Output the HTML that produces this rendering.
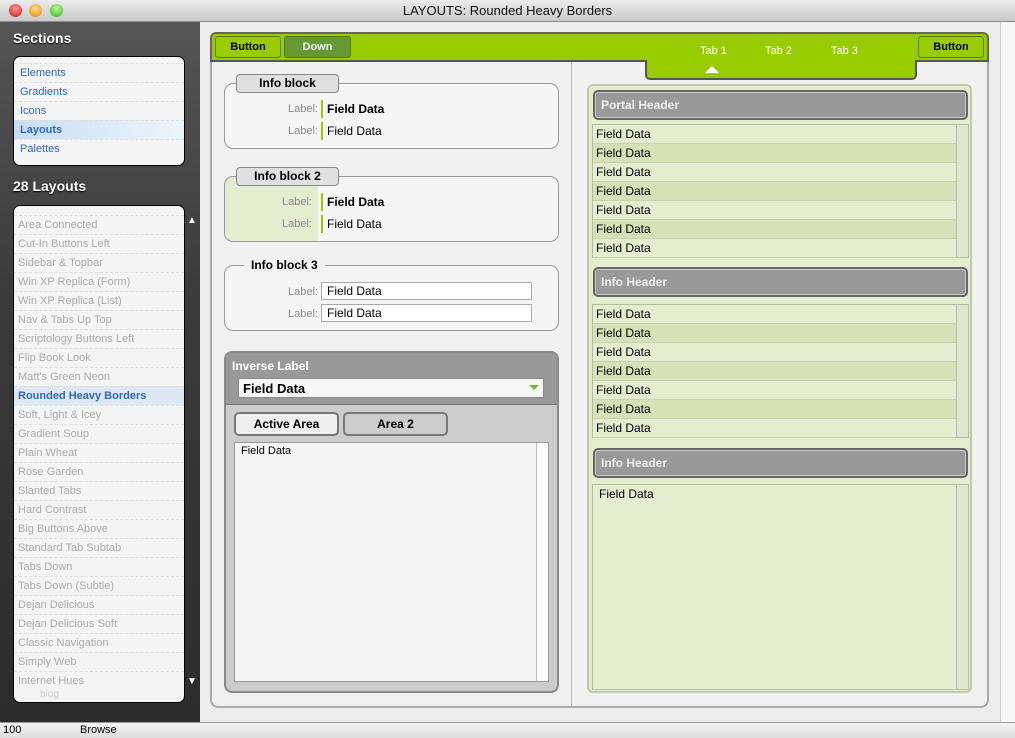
<!DOCTYPE html><html><head><style>
*{margin:0;padding:0;box-sizing:border-box}
body{width:1015px;height:738px;overflow:hidden;font-family:"Liberation Sans",sans-serif;background:#ededed;position:relative;font-size:12px}
.a{position:absolute}
.title{left:0;top:0;width:1015px;height:22px;background:linear-gradient(#ececec,#c9c9c9);border-bottom:1px solid #8c8c8c;text-align:center;font-size:13px;line-height:22px;color:#111}
.dot{width:13px;height:13px;border-radius:50%;top:4px}
.side{left:0;top:22px;width:200px;height:700px;background:linear-gradient(#555 0,#3a3a3a 40%,#2c2c2c)}
.h{color:#fff;font-weight:bold;font-size:14px;text-shadow:0 1px 1px #000}
.box{background:#f4f4f4;border:1px solid #000;border-radius:7px;overflow:hidden}
.it{height:19px;line-height:19px;padding-left:6px;border-top:1px dashed #ddd;font-size:11px}
.sec .it{color:#3366bb}
.lay .it{color:#aaa;padding-left:4px}
.fr{border:2px solid #aaa;border-radius:8px;background:#f1f1f1}
.btn{border:1px solid #5a7a00;border-radius:3px;background:#9c0;font-weight:bold;font-size:11px;text-align:center;line-height:20px;height:22px}
.ib{border:1px solid #999;border-radius:9px;background:#f5f5f5}
.leg{border:1px solid #888;border-radius:4px;background:#e0e0e0;font-weight:bold;font-size:12px;text-align:center;height:19px;line-height:17px}
.lab{color:#888;font-size:11px;text-align:right;width:92px}
.fd{font-size:12px;border-left:2px solid #9c0;padding-left:4px;height:18px;line-height:18px}
.ph{background:#999;border:2px solid #666;border-radius:5px;color:#eee;font-weight:bold;font-size:12px;padding-left:6px;line-height:26px;height:30px;box-shadow:inset 0 0 0 1px #ccc}
.rows{background:#e5ecd0;border:1px solid #b5bd9d}
.r{height:19px;line-height:19px;padding-left:3px;border-bottom:1px solid #c8d0b0;font-size:12px;margin-right:12px}
.r:nth-child(even){background:#d8e0b8}
.sb{right:0;top:0;width:12px;bottom:0;background:#e0e6cc;border-left:1px solid #bbb}
.tb{color:#fff;font-size:11px}
</style></head><body>
<div class="a title">LAYOUTS: Rounded Heavy Borders</div>
<div class="a dot" style="left:9px;background:radial-gradient(circle at 50% 35%,#f99,#c11)"></div>
<div class="a dot" style="left:29px;background:radial-gradient(circle at 50% 35%,#fd8,#d80)"></div>
<div class="a dot" style="left:50px;background:radial-gradient(circle at 50% 35%,#bf9,#3a1)"></div>
<div class="a side"></div>
<div class="a h" style="left:13px;top:30px">Sections</div>
<div class="a box sec" style="left:13px;top:56px;width:172px;height:110px;padding-top:6px">
<div class="it">Elements</div><div class="it">Gradients</div><div class="it">Icons</div><div class="it" style="background:linear-gradient(90deg,#c8def4,#eef4fa);font-weight:bold">Layouts</div><div class="it">Palettes</div></div>
<div class="a h" style="left:13px;top:178px">28 Layouts</div>
<div class="a box lay" style="left:13px;top:205px;width:172px;height:498px;padding-top:9px">
<div class="it">Area Connected</div><div class="it">Cut-In Buttons Left</div><div class="it">Sidebar &amp; Topbar</div><div class="it">Win XP Replica (Form)</div><div class="it">Win XP Replica (List)</div><div class="it">Nav &amp; Tabs Up Top</div><div class="it">Scriptology Buttons Left</div><div class="it">Flip Book Look</div><div class="it">Matt's Green Neon</div><div class="it" style="background:#dde8f4;color:#3366bb;font-weight:bold">Rounded Heavy Borders</div><div class="it">Soft, Light &amp; Icey</div><div class="it">Gradient Soup</div><div class="it">Plain Wheat</div><div class="it">Rose Garden</div><div class="it">Slanted Tabs</div><div class="it">Hard Contrast</div><div class="it">Big Buttons Above</div><div class="it">Standard Tab Subtab</div><div class="it">Tabs Down</div><div class="it">Tabs Down (Subtle)</div><div class="it">Dejan Delicious</div><div class="it">Dejan Delicious Soft</div><div class="it">Classic Navigation</div><div class="it">Simply Web</div><div class="it">Internet Hues</div><div style="font-size:10px;color:#ccc;padding-left:26px;line-height:10px">blog</div></div>
<div class="a" style="left:187px;top:215px;color:#fff;font-size:10px">▲</div>
<div class="a" style="left:187px;top:676px;color:#fff;font-size:10px">▼</div>
<div class="a" style="left:1000px;top:22px;width:15px;height:700px;background:#f6f6f6;border-left:1px solid #ccc"></div>
<div class="a fr" style="left:210px;top:32px;width:779px;height:676px"></div>
<div class="a" style="left:571px;top:62px;width:1px;height:644px;background:#bbb"></div>
<div class="a" style="left:210px;top:32px;width:779px;height:29px;background:#9c0;border:2px solid #666;border-bottom:none;border-radius:6px 6px 0 0"></div>
<div class="a" style="left:210px;top:60px;width:437px;height:2px;background:#555"></div>
<div class="a" style="left:915px;top:60px;width:74px;height:2px;background:#555"></div>
<div class="a" style="left:645px;top:60px;width:272px;height:20px;background:#9c0;border:2px solid #555;border-top:none;border-radius:0 0 5px 5px"></div>
<div class="a btn" style="left:215px;top:36px;width:66px">Button</div>
<div class="a btn" style="left:284px;top:36px;width:67px;background:#693;color:#eee">Down</div>
<div class="a btn" style="left:918px;top:36px;width:66px">Button</div>
<div class="a tb" style="left:700px;top:45px">Tab 1</div>
<div class="a tb" style="left:765px;top:45px">Tab 2</div>
<div class="a tb" style="left:831px;top:45px">Tab 3</div>
<div class="a" style="left:705px;top:66px;width:0;height:0;border:7px solid transparent;border-bottom-color:#fff;border-top:0"></div>
<div class="a ib" style="left:224px;top:83px;width:335px;height:66px"></div>
<div class="a leg" style="left:236px;top:74px;width:103px">Info block</div>
<div class="a lab" style="left:226px;top:103px">Label:</div><div class="a fd" style="left:321px;top:100px;font-weight:bold">Field Data</div>
<div class="a lab" style="left:226px;top:125px">Label:</div><div class="a fd" style="left:321px;top:122px">Field Data</div>
<div class="a ib" style="left:224px;top:176px;width:335px;height:66px;background:linear-gradient(90deg,#e5ecd0 0,#e5ecd0 93px,#f5f5f5 93px)"></div>
<div class="a leg" style="left:236px;top:167px;width:103px">Info block 2</div>
<div class="a lab" style="left:220px;top:196px">Label:</div><div class="a fd" style="left:321px;top:193px;font-weight:bold">Field Data</div>
<div class="a lab" style="left:220px;top:218px">Label:</div><div class="a fd" style="left:321px;top:215px">Field Data</div>
<div class="a ib" style="left:224px;top:265px;width:335px;height:66px"></div>
<div class="a" style="left:244px;top:258px;background:#f1f1f1;padding:0 7px;font-weight:bold">Info block 3</div>
<div class="a lab" style="left:226px;top:286px">Label:</div><div class="a" style="left:321px;top:282px;width:211px;height:18px;border:1px solid #aaa;background:#fff;padding-left:5px;line-height:16px">Field Data</div>
<div class="a lab" style="left:226px;top:308px">Label:</div><div class="a" style="left:321px;top:304px;width:211px;height:18px;border:1px solid #aaa;background:#fff;padding-left:5px;line-height:16px">Field Data</div>
<div class="a" style="left:224px;top:351px;width:335px;height:342px;border:2px solid #888;border-radius:8px;background:#ccc;overflow:hidden">
<div style="background:#999;height:52px;border-bottom:1px solid #777"></div></div>
<div class="a" style="left:232px;top:359px;color:#fff;font-weight:bold;font-size:12px">Inverse Label</div>
<div class="a" style="left:238px;top:378px;width:306px;height:20px;background:#f6f6f6;border:1px solid #888;font-weight:bold;font-size:13px;padding-left:4px;line-height:19px">Field Data</div>
<div class="a" style="left:529px;top:385px;border:5px solid transparent;border-top:5px solid #8a4;border-bottom:0"></div>
<div class="a" style="left:234px;top:412px;width:105px;height:24px;border:2px solid #777;border-radius:5px;background:#eee;font-weight:bold;text-align:center;line-height:20px">Active Area</div>
<div class="a" style="left:343px;top:412px;width:105px;height:24px;border:2px solid #777;border-radius:5px;background:#ccc;font-weight:bold;text-align:center;line-height:20px">Area 2</div>
<div class="a" style="left:234px;top:442px;width:315px;height:240px;background:#f5f5f5;border:1px solid #999;padding:2px 6px;font-size:11px">Field Data<div class="a" style="right:0;top:0;width:12px;height:238px;border-left:1px solid #bbb;background:#fff"></div></div>
<div class="a" style="left:587px;top:84px;width:385px;height:609px;border:2px solid #c0c8a8;border-radius:6px;background:#e5ecd0"></div>
<div class="a ph" style="left:593px;top:90px;width:375px">Portal Header</div>
<div class="a rows" style="left:592px;top:124px;width:377px;height:134px"><div class="r">Field Data</div><div class="r">Field Data</div><div class="r">Field Data</div><div class="r">Field Data</div><div class="r">Field Data</div><div class="r">Field Data</div><div class="r">Field Data</div><div class="a sb"></div></div>
<div class="a ph" style="left:593px;top:267px;width:375px">Info Header</div>
<div class="a rows" style="left:592px;top:304px;width:377px;height:134px"><div class="r">Field Data</div><div class="r">Field Data</div><div class="r">Field Data</div><div class="r">Field Data</div><div class="r">Field Data</div><div class="r">Field Data</div><div class="r">Field Data</div><div class="a sb"></div></div>
<div class="a ph" style="left:593px;top:448px;width:375px">Info Header</div>
<div class="a rows" style="left:592px;top:484px;width:377px;height:206px;padding:2px 6px">Field Data<div class="a sb"></div></div>
<div class="a" style="left:0;top:722px;width:1015px;height:16px;background:linear-gradient(#f4f4f4,#ddd);border-top:1px solid #999;font-size:11px;line-height:15px">
<span style="padding-left:3px">100</span><span style="position:absolute;left:80px">Browse</span></div>
</body></html>
